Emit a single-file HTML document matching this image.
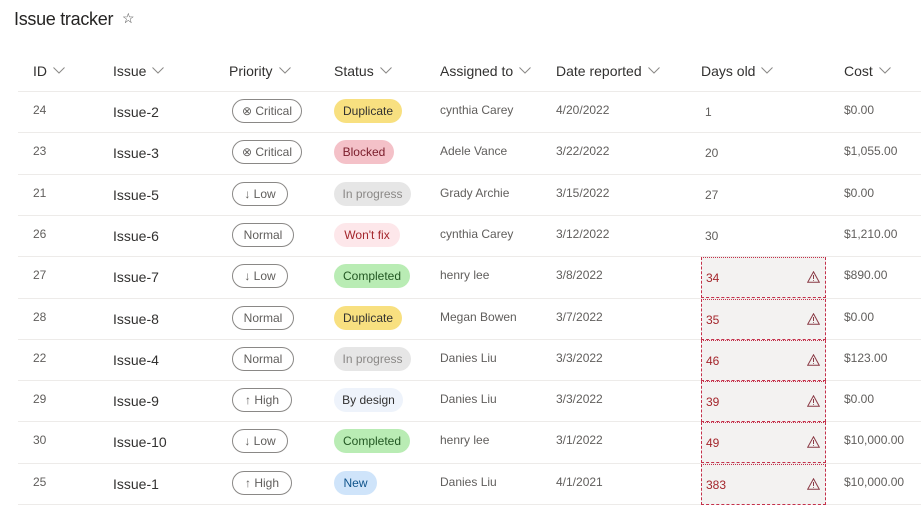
<!DOCTYPE html>
<html><head><meta charset="utf-8"><style>
*{margin:0;padding:0;box-sizing:border-box}
body{width:921px;height:517px;background:#fff;font-family:"Liberation Sans",sans-serif;color:#323130;position:relative;overflow:hidden}
.t{position:absolute;left:14px;top:9px;font-size:18px;color:#252423;letter-spacing:-0.3px}
.star{position:absolute;left:122px;top:10px;font-size:14px;color:#444}
.h{position:absolute;top:63px;font-size:14px;color:#323130}
.h svg{margin-left:6px;vertical-align:2px}
.line{position:absolute;left:18px;width:903px;height:1px;background:#edebe9}
.c{position:absolute;font-size:12px;color:#605e5c;white-space:nowrap}
.iss{font-size:14px;color:#323130}
.pp{position:absolute;height:24px;border:1px solid #8a8886;border-radius:12px;font-size:12px;color:#605e5c;text-align:center;line-height:22px}
.sp{position:absolute;height:24px;border-radius:12px;font-size:12px;text-align:center;line-height:24px}
.dbox{position:absolute;left:701px;width:125px;height:41px;background:#f3f2f1;border:1px dashed #c4314b;border-top-style:dotted}
.dbox b{position:absolute;left:4px;top:13px;font-weight:normal;font-size:12px;color:#a4262c}
.dbox svg{position:absolute;right:5px;top:13px}
</style></head><body>
<div class="t">Issue tracker</div><div class="star">☆</div>
<div id="rows"></div>
<script>
var chev='<svg width="12" height="7" viewBox="0 0 12 7"><path d="M0.5 0.5 L6 6 L11.5 0.5" fill="none" stroke="#8a8886" stroke-width="1"/></svg>';
var warn='<svg width="13" height="12" viewBox="0 0 13 12"><path d="M6.5 0.8 L12.3 11.3 L0.7 11.3 Z" fill="none" stroke="#8a3a45" stroke-width="1"/><path d="M6.5 4 V8 M6.5 9.2 V10" stroke="#8a3a45" stroke-width="1"/></svg>';
var H=[["ID",33],["Issue",113],["Priority",229],["Status",334],["Assigned to",440],["Date reported",556],["Days old",701],["Cost",844]];
var h='';
H.forEach(function(x){h+='<div class="h" style="left:'+x[1]+'px">'+x[0]+chev+'</div>';});
var R=[["24","Issue-2","⊗ Critical",70,"Duplicate","","#f8e080","#323130",68,"cynthia Carey","4/20/2022","1","$0.00"],
["23","Issue-3","⊗ Critical",70,"Blocked","","#f4c1c8","#7a1c2a",60,"Adele Vance","3/22/2022","20","$1,055.00"],
["21","Issue-5","↓ Low",56,"In progress","","#e6e6e6","#8a8886",77,"Grady Archie","3/15/2022","27","$0.00"],
["26","Issue-6","Normal",62,"Won't fix","","#fde7ea","#a4262c",66,"cynthia Carey","3/12/2022","30","$1,210.00"],
["27","Issue-7","↓ Low",56,"Completed","","#b9ecb4","#225722",76,"henry lee","3/8/2022","34","$890.00"],
["28","Issue-8","Normal",62,"Duplicate","","#f8e080","#323130",68,"Megan Bowen","3/7/2022","35","$0.00"],
["22","Issue-4","Normal",62,"In progress","","#e6e6e6","#8a8886",77,"Danies Liu","3/3/2022","46","$123.00"],
["29","Issue-9","↑ High",60,"By design","","#eef3fb","#323130",69,"Danies Liu","3/3/2022","39","$0.00"],
["30","Issue-10","↓ Low",56,"Completed","","#b9ecb4","#225722",76,"henry lee","3/1/2022","49","$10,000.00"],
["25","Issue-1","↑ High",60,"New","","#cfe4fa","#0f548c",43,"Danies Liu","4/1/2021","383","$10,000.00"]];
h+='<div class="line" style="top:91px"></div>';
R.forEach(function(r,i){var y=91+i*41.3,cy=y+20;
h+='<div class="line" style="top:'+(y+41.3)+'px"></div>';
h+='<div class="c" style="left:33px;top:'+(cy-8)+'px">'+r[0]+'</div>';
h+='<div class="c iss" style="left:113px;top:'+(cy-7)+'px">'+r[1]+'</div>';
h+='<div class="pp" style="left:232px;top:'+(cy-12)+'px;width:'+r[3]+'px">'+r[2]+'</div>';
h+='<div class="sp" style="left:334px;top:'+(cy-12)+'px;width:'+r[8]+'px;background:'+r[6]+';color:'+r[7]+'">'+r[4]+'</div>';
h+='<div class="c" style="left:440px;top:'+(cy-8)+'px">'+r[9]+'</div>';
h+='<div class="c" style="left:556px;top:'+(cy-8)+'px">'+r[10]+'</div>';
if(i<4)h+='<div class="c" style="left:705px;top:'+(cy-6)+'px">'+r[11]+'</div>';
else h+='<div class="dbox" style="top:'+(y+1)+'px"><b>'+r[11]+'</b>'+warn+'</div>';
h+='<div class="c" style="left:844px;top:'+(cy-8)+'px">'+r[12]+'</div>';});
document.getElementById('rows').innerHTML=h;
</script>
</body></html>
